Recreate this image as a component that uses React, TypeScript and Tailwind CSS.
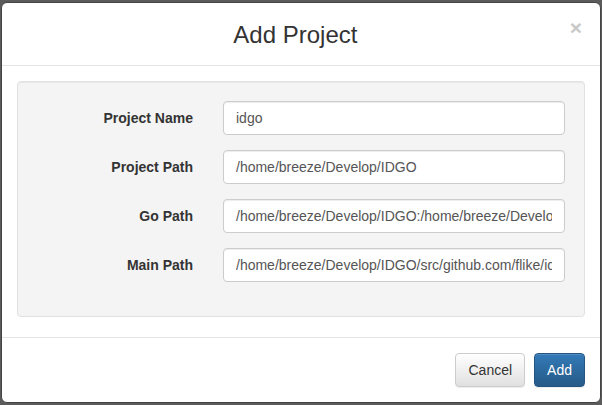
import React from "react";

const rows = [
  { label: "Project Name", value: "idgo" },
  { label: "Project Path", value: "/home/breeze/Develop/IDGO" },
  { label: "Go Path", value: "/home/breeze/Develop/IDGO:/home/breeze/Develop/IDGO/src/github.com" },
  { label: "Main Path", value: "/home/breeze/Develop/IDGO/src/github.com/flike/idgo" },
];

export default function App() {
  return (
    <div
      className="w-[602px] h-[405px] bg-[#5b5b5b] pt-[2px] pl-[1px] overflow-hidden"
      style={{ fontFamily: '"Liberation Sans", Arial, sans-serif' }}
    >
      <div className="w-[600px] h-[401px] bg-white border border-[#444] rounded-[6px] flex flex-col text-[#333] text-[14px]">
        <div className="flex items-center pl-[15px] pr-[15px] h-[63px] border-b border-[#e5e5e5]">
          <h4 className="flex-1 text-center text-[24px] leading-[33px] font-normal text-[#333] pl-[4px]">
            Add Project
          </h4>
          <button className="text-[21px] font-bold leading-none text-[#c8c8c8] -mt-[13px] mr-[3px]">×</button>
        </div>
        <div className="px-[15px] pt-[15px] pb-[20px]">
          <div className="bg-[#f4f4f4] border border-[#e1e1e1] rounded-[4px] p-[19px] shadow-[inset_0_1px_1px_rgba(0,0,0,0.05)]">
            {rows.map((r) => (
              <div key={r.label} className="flex mb-[15px] -mx-[15px]">
                <label className="w-[186px] px-[15px] pt-[7px] text-right font-bold leading-[20px] text-[#333]">
                  {r.label}
                </label>
                <div className="flex-1 px-[15px]">
                  <input
                    readOnly
                    value={r.value}
                    className="w-full h-[34px] px-[12px] py-[6px] bg-white border border-[#ccc] rounded-[4px] text-[14px] text-[#555] leading-[20px] shadow-[inset_0_1px_1px_rgba(0,0,0,0.075)] outline-none"
                    style={{ fontFamily: '"Liberation Sans", Arial, sans-serif' }}
                  />
                </div>
              </div>
            ))}
          </div>
        </div>
        <div className="border-t border-[#e5e5e5] px-[15px] pt-[15px] flex justify-end gap-[9px]">
          <button className="h-[34px] px-[12px] rounded-[4px] border border-[#ccc] text-[#333] text-[14px] bg-gradient-to-b from-white to-[#e0e0e0] shadow-[inset_0_1px_0_rgba(255,255,255,0.15),0_1px_1px_rgba(0,0,0,0.075)]">
            Cancel
          </button>
          <button className="h-[34px] px-[12px] rounded-[4px] border border-[#245580] text-white text-[14px] bg-gradient-to-b from-[#337ab7] to-[#265a88] shadow-[inset_0_1px_0_rgba(255,255,255,0.15),0_1px_1px_rgba(0,0,0,0.075)]">
            Add
          </button>
        </div>
      </div>
    </div>
  );
}
